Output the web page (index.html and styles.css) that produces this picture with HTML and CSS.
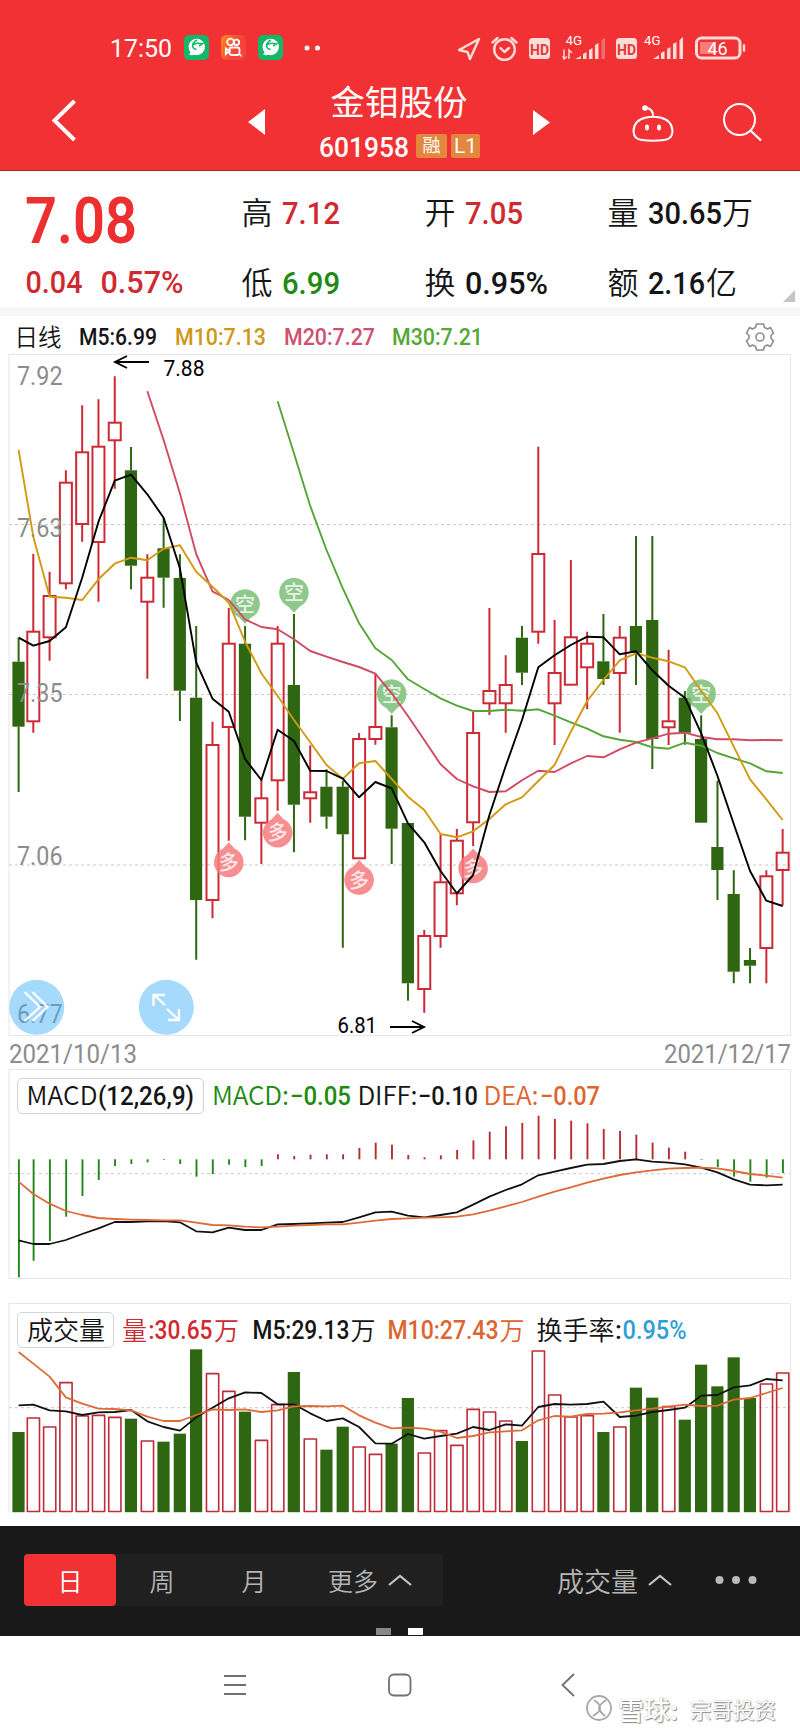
FILE: index.html
```html
<!DOCTYPE html>
<html lang="zh-CN">
<head>
<meta charset="utf-8">
<title>金钼股份 601958</title>
<link rel="stylesheet" href="styles.css">
</head>
<body>
<header class="top">
  <div class="status">
    <svg class="t thin s-time" width="62" height="19"><text x="-1" y="19" font-size="26.5" textLength="62" lengthAdjust="spacingAndGlyphs">17:50</text></svg>
    <svg class="s-app" width="25" height="25" viewBox="0 0 25 25"><rect width="25" height="25" rx="5" fill="#12b768"/><circle cx="12.7" cy="12" r="8.2" fill="#fff"/><path d="M5 19.5Q9 21.500 13 18L8 14Q7 18 5 19.500" fill="#fff"/><path d="M13 5Q8.500 7.500 8.500 11Q9 14 12.500 14.500M8.500 10.500Q11 7 18.500 8.800L15 11" fill="none" stroke="#12b768" stroke-width="1.500"/></svg>
    <svg class="s-app" width="25" height="25" viewBox="0 0 25 25"><defs><linearGradient id="ks" x2="1" y2=".5"><stop stop-color="#ff8a1c"/><stop offset=".7" stop-color="#f4433a"/></linearGradient></defs><rect width="25" height="25" rx="5" fill="url(#ks)"/><g fill="none" stroke="#fff" stroke-width="1.800"><circle cx="9.500" cy="7" r="3.300"/><circle cx="15.500" cy="7.300" r="2.700"/><rect x="8.500" y="12.500" width="10" height="7.500" rx="2"/><path d="M8.500 16L4.800 13.500V19Z"/></g><path d="M20 19.500v2" stroke="#fff" stroke-width="1.500"/></svg>
    <svg class="s-app" width="25" height="25" viewBox="0 0 25 25"><rect width="25" height="25" rx="5" fill="#12b768"/><circle cx="12.7" cy="12" r="8.2" fill="#fff"/><path d="M5 19.5Q9 21.500 13 18L8 14Q7 18 5 19.500" fill="#fff"/><path d="M13 5Q8.500 7.500 8.500 11Q9 14 12.500 14.500M8.500 10.500Q11 7 18.500 8.800L15 11" fill="none" stroke="#12b768" stroke-width="1.500"/></svg>
    <svg class="s-dots" width="17" height="6"><circle cx="3" cy="3" r="2.500" fill="#fff"/><circle cx="13.500" cy="3" r="2.500" fill="#fff"/></svg>
    <svg class="s-right" width="290" height="28" viewBox="456 33 290 28">
      <g fill="none" stroke="#ffdcd8" stroke-width="2.400" stroke-linejoin="round" stroke-linecap="round">
        <path d="M479 38L459 49L467.500 51L470 58Z"/>
        <circle cx="504.500" cy="48.500" r="10.300"/><path d="M500.500 47l4 4l4.500-4M492.500 41.500l5-4.500M516.500 41.500l-5-4.500"/>
        <rect x="696.500" y="37" width="43.500" height="20" rx="5" stroke-width="3"/><path d="M744 44.500v5"/>
      </g>
      <path d="M700 41h16v12h-16z" fill="#f77b77"/>
      <g fill="#ffdcd8">
        <rect x="529" y="37" width="21" height="21" rx="3.500"/><rect x="616" y="37" width="21" height="21" rx="3.500"/>
        <path d="M575 58h6v-3zM583 58h3.500v-7l-3.500 2zM589 58h3.500V47l-3.500 2zM595 58h3.500V42l-3.500 2zM653 58h6v-4zM661 58h3.500v-8l-3.500 2zM667 58h3.500V46l-3.500 2zM673 58h3.500V41l-3.500 2zM679.500 58h3.500V36l-3.500 3z"/>
        <path d="M601.500 58h3.500V37l-3.500 2z" opacity=".35"/>
        <path d="M564 57.500v-9M567 55.500l-3 2.500l-1-3M569 58v-9l3 3" fill="none" stroke="#ffdcd8" stroke-width="1.500"/>
      </g>
      <g class="sans"><text x="530" y="53.500" font-size="15" font-weight="700" fill="#e23a36" textLength="19" lengthAdjust="spacingAndGlyphs">HD</text><text x="617" y="53.500" font-size="15" font-weight="700" fill="#e23a36" textLength="19" lengthAdjust="spacingAndGlyphs">HD</text>
      <text x="565.500" y="44" font-size="12.500" fill="#fff" textLength="16.500" lengthAdjust="spacingAndGlyphs">4G</text><text x="644" y="44" font-size="12.500" fill="#fff" textLength="16.500" lengthAdjust="spacingAndGlyphs">4G</text>
      <text x="707.500" y="53.800" font-size="18" fill="#fff" textLength="20">46</text></g>
    </svg>
  </div>
  <nav class="titlebar">
    <svg class="h-back" width="26" height="46"><path d="M23.500 3L3.500 22.500L23.500 42" fill="none" stroke="#fff" stroke-width="4"/></svg>
    <svg class="h-prev" width="17" height="26"><path d="M17 0L0 13L17 26z" fill="#fff"/></svg>
    <div class="name">
      <svg class="t cjk title" width="136" height="30"><text x="-1.500" y="28.500" font-size="34.500" textLength="137" lengthAdjust="spacingAndGlyphs">金钼股份</text></svg>
      <div class="code">
        <svg class="t num" width="89" height="20"><text x="-1" y="20.500" font-size="28" font-weight="600" textLength="90" lengthAdjust="spacingAndGlyphs">601958</text></svg>
        <span class="tag">融</span><span class="tag l1">L1</span>
      </div>
    </div>
    <svg class="h-next" width="17" height="25"><path d="M0 0L17 12.500L0 25z" fill="#fff"/></svg>
    <svg class="h-bot" width="42" height="38" viewBox="0 0 42 38"><g fill="none" stroke="#fff" stroke-width="2"><path d="M14 12.500Q21 11 28 12.500Q40 15 40.500 26Q40.500 34 32 35Q21 36.500 10 35Q1.500 34 1.500 26Q2 15 14 12.500zM21 12Q21.500 3.500 14 3"/></g><circle cx="13" cy="3" r="2.800" fill="#fff"/><ellipse cx="15" cy="22.500" rx="2" ry="3" fill="#fff"/><ellipse cx="27" cy="22.500" rx="2" ry="3" fill="#fff"/></svg>
    <svg class="h-find" width="40" height="40"><circle cx="16.500" cy="16.500" r="15.500" fill="none" stroke="#fff" stroke-width="2"/><path d="M28 28L38 37.500" stroke="#fff" stroke-width="2.400"/></svg>
  </nav>
</header>

<section class="quote">
  <div class="price red">
    <svg class="t num" width="108" height="46"><text x="-2" y="46" font-size="64" textLength="112" lengthAdjust="spacingAndGlyphs" class="big">7.08</text></svg>
    <div class="line dred">
      <svg class="t num" width="56" height="23"><text x="-1.500" y="23" font-size="32" textLength="57" lengthAdjust="spacingAndGlyphs">0.04</text></svg>
      <svg class="t num" width="82" height="23"><text x="-1.500" y="23" font-size="32" textLength="83" lengthAdjust="spacingAndGlyphs">0.57%</text></svg>
    </div>
  </div>
  <div class="cells">
    <div class="line"><svg class="t cjk" width="30" height="23"><text x="-1.500" y="23" font-size="31">高</text></svg><svg class="t num dred" width="57" height="23"><text x="-1" y="23" font-size="32" textLength="58" lengthAdjust="spacingAndGlyphs">7.12</text></svg></div>
    <div class="line"><svg class="t cjk" width="30" height="23"><text x="-1.500" y="23" font-size="31">开</text></svg><svg class="t num dred" width="57" height="23"><text x="-1" y="23" font-size="32" textLength="58" lengthAdjust="spacingAndGlyphs">7.05</text></svg></div>
    <div class="line"><svg class="t cjk" width="30" height="23"><text x="-1.500" y="23" font-size="31">量</text></svg><svg class="t num" width="72" height="23"><text x="-1" y="23" font-size="32" textLength="74" lengthAdjust="spacingAndGlyphs">30.65</text></svg><svg class="t cjk unit" width="30" height="23"><text y="23" font-size="31">万</text></svg></div>
    <div class="line"><svg class="t cjk" width="30" height="23"><text x="-1.500" y="23" font-size="31">低</text></svg><svg class="t num green" width="57" height="23"><text x="-1" y="23" font-size="32" textLength="58" lengthAdjust="spacingAndGlyphs">6.99</text></svg></div>
    <div class="line"><svg class="t cjk" width="30" height="23"><text x="-1.500" y="23" font-size="31">换</text></svg><svg class="t num" width="82" height="23"><text x="-1" y="23" font-size="32" textLength="83" lengthAdjust="spacingAndGlyphs">0.95%</text></svg></div>
    <div class="line"><svg class="t cjk" width="30" height="23"><text x="-1.500" y="23" font-size="31">额</text></svg><svg class="t num" width="55" height="23"><text x="-1" y="23" font-size="32" textLength="57" lengthAdjust="spacingAndGlyphs">2.16</text></svg><svg class="t cjk unit" width="30" height="23"><text x="1" y="23" font-size="31">亿</text></svg></div>
  </div>
  <svg class="corner" width="12" height="12"><path d="M12 0V12H0z" fill="#c4c4c4"/></svg>
</section>

<div class="ma-legend">
  <svg class="t cjk" width="44" height="17"><text x="-2.500" y="17.500" font-size="23.500" textLength="47">日线</text></svg>
  <svg class="t num ml19" width="77" height="17"><text x="-1" y="17" font-size="23" textLength="78" lengthAdjust="spacingAndGlyphs">M5:6.99</text></svg>
  <svg class="t num gold ml19" width="90" height="17"><text y="17" font-size="23" textLength="91" lengthAdjust="spacingAndGlyphs">M10:7.13</text></svg>
  <svg class="t num pink ml19" width="90" height="17"><text y="17" font-size="23" textLength="91" lengthAdjust="spacingAndGlyphs">M20:7.27</text></svg>
  <svg class="t num lime ml19" width="88" height="17"><text y="17" font-size="23" textLength="91" lengthAdjust="spacingAndGlyphs">M30:7.21</text></svg>
  <svg class="gear" width="30" height="30" viewBox="-15 -15 30 30"><path d="M-3.500 -13H3.500L4.500 -9.500L7.500 -8L10.500 -9.500L13.500 -3.800L11 -1.500V1.500L13.500 3.800L10.500 9.500L7.500 8L4.500 9.500L3.500 13H-3.500L-4.500 9.500L-7.500 8L-10.500 9.500L-13.500 3.800L-11 1.500V-1.500L-13.500 -3.800L-10.500 -9.500L-7.500 -8L-4.500 -9.500Z" fill="none" stroke="#8e8e8e" stroke-width="1.600" stroke-linejoin="round"/><circle r="4" fill="none" stroke="#8e8e8e" stroke-width="1.600"/></svg>
</div>

<svg class="kline" width="800" height="682" viewBox="0 354 800 682">
  <path d="M9 354.500H790.500V1035.500H9z" fill="none" stroke="#e6e6e6"/>
  <path d="M9 524.500H790M9 694.500H790M9 865H790" stroke="#c8c8c8" stroke-dasharray="3 3"/>
  <g id="candles"></g>
  <g id="marks"></g>
  <g id="averages" fill="none" stroke-linejoin="round"></g>
  <g fill="#a6dafd"><circle cx="36.700" cy="1007.300" r="27.500"/><circle cx="166.300" cy="1007.300" r="27.500"/></g>
  <g class="axis" font-size="25">
    <text x="17" y="385" textLength="45.500" lengthAdjust="spacingAndGlyphs">7.92</text>
    <text x="17" y="536.500" textLength="45.500" lengthAdjust="spacingAndGlyphs">7.63</text>
    <text x="17" y="701.500" textLength="45.500" lengthAdjust="spacingAndGlyphs">7.35</text>
    <text x="17" y="865" textLength="45.500" lengthAdjust="spacingAndGlyphs">7.06</text>
    <text class="veiled" x="17" y="1023" textLength="45.500" lengthAdjust="spacingAndGlyphs">6.77</text>
  </g>
  <g class="peak" font-size="21.500"><text x="163.500" y="376" textLength="41" lengthAdjust="spacingAndGlyphs">7.88</text><text x="337.500" y="1033" textLength="39.500" lengthAdjust="spacingAndGlyphs">6.81</text></g>
  <path d="M149 362H115M127 356L115 362L127 368M390 1027H424M412 1021L424 1027L412 1033" fill="none" stroke="#000" stroke-width="1.900"/>
  <path d="M24.500 992L40 1007L24.500 1021M32.500 992L47.500 1007L32.500 1021M165 1005L154 995M153.500 1006V995H165M167 1009L179 1020M179 1009V1020H168" fill="none" stroke="#fff" stroke-width="2.300"/>
</svg>

<div class="dates">
  <svg class="t axis" width="127" height="18"><text x="-1" y="18" font-size="25" textLength="128" lengthAdjust="spacingAndGlyphs">2021/10/13</text></svg>
  <svg class="t axis" width="127" height="18"><text x="1" y="18" font-size="25" textLength="127" lengthAdjust="spacingAndGlyphs">2021/12/17</text></svg>
</div>

<section class="panel macd">
  <svg class="plot" width="800" height="210" viewBox="0 1069 800 210">
    <path d="M9 1069.500H790.500V1278.500H9z" fill="none" stroke="#e6e6e6"/>
    <path d="M9 1173.700H790" stroke="#c8c8c8" stroke-dasharray="3 3"/>
    <g id="macd" fill="none" stroke-linejoin="round"></g>
  </svg>
  <div class="legend">
    <div class="chip"><svg class="t" width="166" height="19"><text class="cjkf" x="-2.500" y="18" font-size="26" textLength="71">MACD</text><text class="numf" x="69" y="18" font-size="26" textLength="96" lengthAdjust="spacingAndGlyphs">(12,26,9)</text></svg></div>
    <svg class="t green" width="138" height="19"><text class="cjkf" x="-2" y="18" font-size="26" textLength="77">MACD:</text><text class="numf" x="76" y="18" font-size="26" textLength="61" lengthAdjust="spacingAndGlyphs">−0.05</text></svg>
    <svg class="t" width="119" height="19"><text class="cjkf" x="-2.500" y="18" font-size="26" textLength="60">DIFF:</text><text class="numf" x="58" y="18" font-size="26" textLength="60" lengthAdjust="spacingAndGlyphs">−0.10</text></svg>
    <svg class="t orange" width="116" height="19"><text class="cjkf" x="-3.500" y="18" font-size="26" textLength="55">DEA:</text><text class="numf" x="53" y="18" font-size="26" textLength="60" lengthAdjust="spacingAndGlyphs">−0.07</text></svg>
  </div>
</section>

<section class="panel volume">
  <svg class="plot" width="800" height="211" viewBox="0 1303 800 211">
    <path d="M9 1512.500V1303.500H790.500V1512.500" fill="none" stroke="#e6e6e6"/>
    <path d="M9 1407.700H790" stroke="#c8c8c8" stroke-dasharray="3 3"/>
    <g id="volume" fill="none" stroke-linejoin="round"></g>
  </svg>
  <div class="legend">
    <div class="chip small"><svg class="t" width="76" height="19"><text class="cjkf" x="-2" y="19" font-size="26">成交量</text></svg></div>
    <svg class="t dred" width="116" height="19"><text class="cjkf" x="-1" y="19" font-size="25">量</text><text class="numf" x="25.500" y="18" font-size="26" textLength="64" lengthAdjust="spacingAndGlyphs">:30.65</text><text class="cjkf" x="91" y="19" font-size="25">万</text></svg>
    <svg class="t v-m5" width="120" height="19"><text class="numf" x="-1.500" y="18" font-size="26" textLength="97" lengthAdjust="spacingAndGlyphs">M5:29.13</text><text class="cjkf" x="96.500" y="19" font-size="25">万</text></svg>
    <svg class="t orange v-m10" width="135" height="19"><text class="numf" x="-1.500" y="18" font-size="26" textLength="111" lengthAdjust="spacingAndGlyphs">M10:27.43</text><text class="cjkf" x="110.500" y="19" font-size="25">万</text></svg>
    <svg class="t v-rate" width="148" height="19"><text class="cjkf" x="-1.500" y="19" font-size="26">换手率</text><text class="numf" x="77" y="18" font-size="26">:</text><text class="numf blue" x="84.500" y="18" font-size="26" textLength="64" lengthAdjust="spacingAndGlyphs">0.95%</text></svg>
  </div>
</section>

<footer class="tools">
  <div class="periods">
    <span class="tab on">日</span><span class="tab">周</span><span class="tab">月</span><span class="tab more">更多<svg width="24" height="12"><path d="M1 11L12 2L23 11" fill="none" stroke="#c4c4c4" stroke-width="2.200"/></svg></span>
  </div>
  <span class="indicator">成交量<svg width="24" height="12"><path d="M1 11L12 2L23 11" fill="none" stroke="#c4c4c4" stroke-width="2.200"/></svg></span>
  <svg class="ellipsis" width="42" height="10"><g fill="#b9b9b9"><circle cx="4.500" cy="5" r="4"/><circle cx="21" cy="5" r="4"/><circle cx="37.500" cy="5" r="4"/></g></svg>
  <div class="pages"><i></i><i class="now"></i></div>
</footer>

<div class="sysnav">
  <svg width="24" height="24"><path d="M1 3H23M1 12H23M1 21H23" stroke="#707070" stroke-width="1.800"/></svg>
  <svg class="n-home" width="24" height="24"><rect x="1" y="1.500" width="21.500" height="21" rx="5" fill="none" stroke="#707070" stroke-width="1.800"/></svg>
  <svg class="n-back" width="14" height="24"><path d="M13 1L1.500 12L13 23" fill="none" stroke="#707070" stroke-width="1.800"/></svg>
  <div class="mark">
    <svg width="28" height="28" viewBox="-14 -14 28 28"><g fill="none" stroke-width="1.800" stroke="#a8a8a8"><circle r="12"/><path d="M-5 -8Q2 -3 1 0Q2 3 -6 8M7 -8Q-1 -2 0 0Q1 4 6 8"/></g></svg>
    <b>雪球:</b><span>宗哥投资</span>
  </div>
</div>
<script src="chart.js"></script>
</body>
</html>
```
FILE: styles.css
```css
* { box-sizing: border-box; }
body { margin: 0; width: 800px; height: 1733px; background: #fff; overflow: hidden; color: #151515; font-family: Roboto, "Noto Sans CJK SC", sans-serif; }
svg { display: block; flex: none; }
text { fill: currentColor; }
svg.t, svg.kline { overflow: visible; }
.num text, .numf { font-family: Roboto, sans-serif; font-weight: 500; }
.num text.big { font-weight: 600; }
.cjk text, .cjkf { font-family: "Noto Sans CJK SC", sans-serif; font-weight: 350; }
.cjk.title text { font-weight: 400; }
.thin text { font-family: Roboto, sans-serif; font-weight: 400; }
.sans text { font-family: Roboto, sans-serif; }
.sans text[fill="#fff"] { fill: #fff; }
.sans text[font-weight="700"] { fill: #e23a36; }
.red { color: #ee2f30; }
.dred { color: #cf2a30; }
.green { color: #218a12; }
.gold { color: #cf9714; }
.pink { color: #cf5070; }
.lime { color: #55a735; }
.orange { color: #de6430; }
.blue { color: #2f9fd8; }
.line { display: flex; align-items: flex-end; }

.top { height: 171px; background: #f13133; border-bottom: 1px solid #a32b2b; color: #fff; }
.status { display: flex; align-items: center; height: 81px; padding: 14px 0 0 111px; }
.s-time { margin-right: 1px; }
.s-app { margin-left: 12px; }
.s-app + .s-dots { margin-left: 21px; }
.s-time + .s-app { margin-left: 10px; }
.s-right { margin-left: 135px; }
.titlebar { display: flex; align-items: flex-start; height: 89px; }
.h-back { margin: 17px 0 0 51px; }
.h-prev { margin: 28px 0 0 171px; }
.name { margin: 5px 0 0 55px; width: 161px; }
.name > .cjk { margin-left: 12px; }
.code { display: flex; align-items: flex-end; margin-top: 18px; height: 24px; }
.code .num { margin-bottom: 2px; }
.tag { width: 31px; height: 24px; margin-left: 7px; border-radius: 2px; background: #e3873f; font-size: 18px; line-height: 24px; text-align: center; font-weight: 400; flex: none; }
.tag.l1 { width: 29px; margin-left: 4px; font-size: 21px; }
.h-next { margin: 29px 0 0 52px; }
.h-bot { margin: 24px 0 0 82px; }
.h-find { margin: 22px 0 0 49px; }

.quote { display: flex; height: 145px; border-bottom: 9px solid #f7f7f7; }
.price { width: 243px; padding: 26px 0 0 27px; }
.price .line { gap: 19px; margin-top: 27px; }
.cells { display: grid; grid-template-columns: 183px 183px 160px; grid-template-rows: 23px 23px; row-gap: 47px; padding-top: 30px; width: 541px; }
.cells .num { margin-left: 10px; }
.cells .unit { margin-left: 1px; }
.corner { align-self: flex-end; margin: 0 0 5px -1px; }

.ma-legend { display: flex; align-items: flex-end; height: 38px; padding: 0 0 9px 17px; }
.ml19 { margin-left: 18.500px; }
.gear { margin: 0 25px -7px auto; }
.axis text { fill: #8c8c8c; font-family: Roboto, sans-serif; font-weight: 400; }
.axis text.veiled { fill: #6c9dbc; }
.peak text { font-family: Roboto, sans-serif; font-weight: 400; fill: #000; }
.dates { display: flex; justify-content: space-between; height: 33px; padding: 9px 10px 0; }

.panel { display: grid; }
.panel > * { grid-area: 1 / 1; }
.macd { height: 210px; }
.volume { height: 211px; margin-top: 24px; }
.legend { display: flex; height: 36px; margin: 9px 0 0 17px; }
.legend > .t { margin: 9px 0 0 8px; }
.chip { width: 187px; height: 36px; padding: 8px 0 0 11px; border: 1px solid #d4d4d4; border-radius: 5px; background: #fff; }
.legend > .chip + .t { margin-left: 10px; }
.legend > .chip.small + .t { margin-left: 9px; }
.chip.small { width: 97px; }
.legend .v-m5 { margin-left: 15px; }
.legend .v-m10 { margin-left: 15px; }
.legend .v-rate { margin-left: 14px; }

.tools { display: grid; grid-template-columns: 419px 115px 157px 1fr; grid-template-rows: 52px 22px; height: 110px; margin-top: 12px; padding: 28px 0 0 24px; background: #191919; color: #b4b4b4; font-family: "Noto Sans CJK SC", sans-serif; font-weight: 350; font-size: 25px; }
.periods { display: flex; background: #202020; border-radius: 4px; line-height: 52px; }
.tab { width: 92px; text-align: center; }
.tab.on { border-radius: 4px; background: #f13133; color: #fff; }
.tab.more { display: flex; align-items: center; gap: 10px; width: 143px; padding-left: 28px; }
.indicator { grid-column: 3; display: flex; align-items: center; gap: 10px; font-size: 27px; white-space: nowrap; margin-left: -1px; }
.ellipsis { align-self: center; }
.pages { grid-column: 1 / -1; display: flex; gap: 17px; align-items: flex-end; padding-left: 352px; height: 29px; }
.pages i { width: 15px; height: 7px; background: #888; }
.pages .now { background: #fff; }

.sysnav { display: flex; height: 97px; padding: 37px 0 0 223px; }
.n-home { margin-left: 141px; }
.n-back { margin-left: 149px; }
.mark { display: flex; align-items: center; height: 30px; margin: 20px 0 0 10px; color: #fff; font-family: "Noto Sans CJK SC", sans-serif; font-size: 26px; white-space: nowrap; text-shadow: 1px 1px 1px #888, 0 0 1px #999; }
.mark b { margin-left: 5px; font-weight: 500; width: 72px; }
.mark span { font-size: 21.500px; }
```
FILE: chart.js
```js
const NS = 'http://www.w3.org/2000/svg';
const RED = '#cc2a35', GREEN = '#2f6612';
const xAt = i => (i === 0 ? 18.6 : 33.3 + 16.29 * (i - 1));
function add(parent, tag, attrs, text) {
  const el = document.createElementNS(NS, tag);
  for (const k in attrs) el.setAttribute(k, attrs[k]);
  if (text) el.textContent = text;
  parent.appendChild(el);
}
const line = (parent, start, ys, color, width) => add(parent, 'polyline', {
  points: ys.map((y, k) => xAt(start + k) + ',' + y).join(' '), stroke: color, 'stroke-width': width, fill: 'none'
});

// direction, high, body top, body bottom, low
const days = [
  'g 637.7 661.7 726.7 792', 'r 554 631.7 721.3 732.7', 'r 571.7 596 637.3 660.7', 'r 470.3 482.7 583.3 589.3',
  'r 405.3 452.3 524 541.7', 'r 399.3 446.7 542 601.7', 'r 376.3 422.7 440.3 488.7', 'g 447 470.3 565.7 589.3',
  'r 554.3 577.7 601.7 678.7', 'g 518.3 548.3 577.7 607.7', 'g 554.3 578 690.7 721', 'g 626 697.7 900 959.7',
  'r 721.7 745 900 918.3', 'r 608 643.7 727 840.7', 'g 626 643.7 816.7 840.3', 'r 780 798.3 822.7 864',
  'r 626 643.7 780.3 810.7', 'g 614 685 804.7 852.3', 'r 745.3 792.3 798.3 822.7', 'g 769.3 786.7 816.7 828.7',
  'g 780.7 786.7 834.3 947.7', 'r 733 739 858.3 858.3', 'r 673.3 727 739 744.7', 'g 715.3 727.3 828.7 864',
  'g 823 823 983.3 1000.7', 'r 930 936 989 1012.7', 'r 834.3 882.3 936 947.7', 'r 829 840.7 893.3 905.3',
  'r 711.7 733 822.3 846', 'r 608 691 703.3 715', 'r 655.3 685 703.3 732.7', 'g 626 637.7 672.7 685',
  'r 446.7 554 631.7 643.7', 'r 620 673 703.3 745', 'r 560 637.3 684.7 684.7', 'r 631.7 643.7 667.3 709',
  'g 614 661.3 679 685', 'r 626 637.7 673 732.7', 'g 536 626 653 685', 'g 536 620 739 769',
  'r 649.7 721.3 727.3 745', 'g 691 697.7 732.7 744.7', 'g 715.3 739 822.7 822.7', 'g 780.7 847 870 900',
  'g 870.3 894 971.7 983.3', 'g 948 960 965.7 983.3', 'r 870.3 876.3 948 983.3', 'r 829 852.7 870 905.3'
].map(s => s.split(' ').map((v, k) => (k ? +v : v)));

const candles = document.getElementById('candles');
days.forEach(([dir, high, top, bottom, low], i) => {
  const x = xAt(i), color = dir === 'g' ? GREEN : RED;
  add(candles, 'path', { d: `M${x} ${high}V${top}M${x} ${bottom}V${low}`, stroke: color, 'stroke-width': 2 });
  if (dir === 'g') add(candles, 'rect', { x: x - 6.2, y: top, width: 12.2, height: bottom - top, fill: color });
  else add(candles, 'rect', { x: x - 6, y: top, width: 12, height: bottom - top, fill: 'none', stroke: color, 'stroke-width': 2 });
});

const marks = document.getElementById('marks');
const pin = (i, y, word) => {
  const x = xAt(i), s = word === '空' ? 1 : -1;
  add(marks, 'path', {
    d: `M${x - 6} ${y + s * 13.5}L${x} ${y + s * 20}L${x + 6} ${y + s * 13.5}A14.8 14.8 0 1 ${s > 0 ? 0 : 1} ${x - 6} ${y + s * 13.5}Z`,
    fill: s > 0 ? '#7cc078' : '#f67b7f', 'fill-opacity': 0.86
  });
  add(marks, 'text', { x, y: y + 7.5, 'text-anchor': 'middle', 'font-size': 20, style: 'fill:#fff;fill-opacity:.8;font-weight:500;font-family:"Noto Sans CJK SC",sans-serif' }, word);
};
pin(14, 604, '空'); pin(17, 592.7, '空'); pin(23, 694, '空'); pin(42, 694, '空');
pin(13, 862.3, '多'); pin(16, 832.7, '多'); pin(21, 880, '多'); pin(28, 868.5, '多');

const avg = document.getElementById('averages');
line(avg, 16, [401.3, 453.3, 506, 550, 588.3, 623.3, 648.3, 660, 679.3, 689, 698.3, 705.7, 711, 711, 709.7, 710.7, 709.3, 715.7, 722.3, 728.7, 736.3, 739.7, 742, 747.3, 748.7, 742.7, 745.7, 753, 758.3, 763.3, 771.3, 773], '#55a535', 1.9);
line(avg, 8, [391.3, 440, 493.3, 554, 591.3, 600, 619.3, 627, 629.3, 639.3, 651, 656.7, 662, 667, 673.7, 693.3, 716, 740, 764.3, 779, 786.3, 792, 791.3, 780.3, 770.7, 772, 763.3, 756, 757.3, 749.3, 742.7, 738.3, 733.7, 732.7, 737, 739.3, 739.3, 740.3, 740, 740.3], '#d04a64', 1.9);
line(avg, 0, [450, 536.7, 596.7, 597.7, 600, 579.3, 563.7, 557.7, 560.3, 548.7, 545.3, 571.7, 586.7, 602.7, 641.7, 673.3, 696, 720, 742.3, 765, 778.7, 763.3, 761, 779, 796.7, 810, 834, 837.3, 831.3, 819, 804.3, 797.3, 781, 765, 731.7, 701, 680, 660.3, 653.3, 657.7, 661.3, 667.3, 691, 713.3, 746.7, 779.3, 799.3, 820], '#d29a12', 1.9);
line(avg, 0, [637.7, 645.7, 641, 627.3, 577.7, 521.7, 480.7, 474.7, 494.3, 517.7, 568.3, 662.3, 698.7, 711.7, 759, 780, 729.7, 741, 770.7, 771, 778.7, 797.3, 782, 788.3, 823.3, 842.3, 871, 893.3, 875, 815, 766, 720, 667.3, 655.3, 645, 636.7, 637.3, 654.3, 651.3, 670.3, 685.7, 697.7, 733.3, 776, 824, 871, 900.7, 906], '#000', 1.9);

// the lower panels store offsets in thirds of a pixel below y = 1060
const low = v => 1060 + v / 3;
const macd = document.getElementById('macd');
[652, 602, 543, 470, 408, 360, 318, 312, 307, 300, 312, 350, 342, 314, 321, 318, 283, 288, 284, 283, 283, 264, 248, 254, 285, 292, 286, 270, 241, 215, 199, 189, 167, 177, 182, 190, 207, 213, 224, 248, 263, 275, 300, 321, 350, 365, 353, 339].forEach((v, i) =>
  add(macd, 'path', { d: `M${xAt(i) + .3} ${low(298)}V${low(v)}`, stroke: v > 298 ? '#21861a' : '#b92a35', 'stroke-width': 1.9 }));
line(macd, 0, [541, 552, 552, 540, 522, 505, 486, 486, 484, 483, 487, 514, 517, 503, 510, 510, 493, 492, 490, 488, 486, 472, 457, 455, 467, 472, 465, 457, 434, 410, 390, 373, 346, 335, 324, 314, 312, 303, 298, 305, 308, 313, 323, 337, 358, 374, 376, 374].map(low), '#111', 1.8);
line(macd, 0, [365, 402, 431, 453, 465, 474, 477, 479, 480, 481, 481, 488, 495, 496, 500, 502, 500, 497, 495, 493, 493, 488, 482, 477, 475, 473, 472, 470, 463, 452, 439, 426, 410, 395, 382, 368, 356, 345, 337, 331, 326, 324, 323, 325, 333, 342, 347, 353].map(low), '#de6a38', 1.8);

const volume = document.getElementById('volume');
[1116, 1074, 1101, 968, 1068, 1066, 1072, 1076, 1143, 1145, 1121, 868, 941, 994, 1055, 1141, 1034, 936, 1137, 1169, 1100, 1161, 1183, 1151, 1014, 1179, 1112, 1156, 1048, 1056, 1083, 1143, 873, 1005, 1071, 1067, 1116, 1101, 983, 1013, 1040, 1079, 914, 979, 892, 1014, 972, 939].forEach((v, i) => {
  const x = xAt(i), y = low(v);
  if (days[i][0] === 'g') add(volume, 'rect', { x: x - 6.2, y, width: 12.2, height: 1512.2 - y, fill: GREEN });
  else add(volume, 'rect', { x: x - 6, y, width: 12.2, height: 1511.5 - y, stroke: '#bd2c3a', 'stroke-width': 1.6 });
});
line(volume, 0, [1036, 1034, 1051, 1054, 1065, 1057, 1056, 1050, 1084, 1101, 1112, 1072, 1043, 1015, 997, 999, 1033, 1033, 1060, 1083, 1075, 1101, 1150, 1151, 1122, 1136, 1128, 1121, 1101, 1110, 1093, 1097, 1041, 1032, 1034, 1032, 1025, 1071, 1067, 1056, 1050, 1043, 1007, 1005, 982, 976, 957, 961].map(low), '#111', 1.8);
line(volume, 0, [876, 911, 950, 1012, 1031, 1046, 1047, 1051, 1070, 1083, 1083, 1065, 1048, 1050, 1048, 1056, 1051, 1039, 1038, 1039, 1037, 1066, 1088, 1105, 1103, 1106, 1115, 1134, 1128, 1117, 1114, 1111, 1081, 1068, 1070, 1062, 1061, 1057, 1051, 1046, 1040, 1034, 1038, 1037, 1019, 1014, 999, 984].map(low), '#de6a38', 1.8);
```
